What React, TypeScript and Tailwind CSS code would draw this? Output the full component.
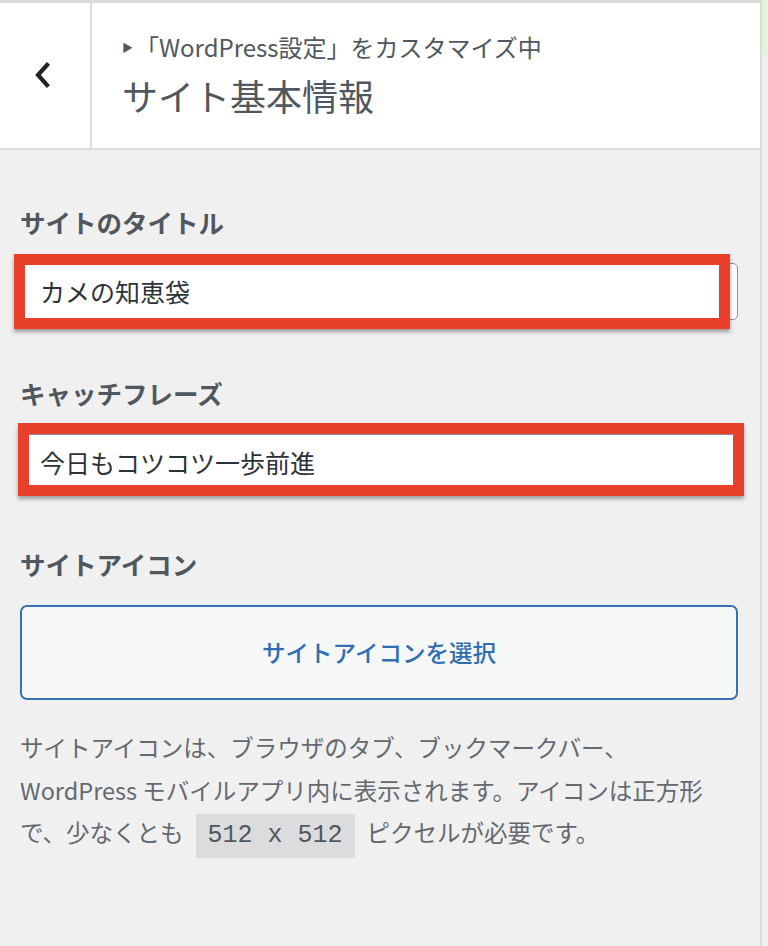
import React from "react";

const jp = { fontFamily: '"Noto Sans CJK JP", "Noto Sans", sans-serif' };

const Field: React.FC<{ label: string; value: string; mark: "a" | "b" }> = ({ label, value, mark }) => (
  <div className="mb-[58px]">
    <div className="h-[30px] flex items-center text-[25.5px] font-bold text-[#50575e] mb-[26px]">{label}</div>
    <div className="relative">
      <div className="h-[57px] bg-white border border-[#8c8f94] rounded-[5px] flex items-center px-[19px] text-[25px] text-[#2c3338]">
        {value}
      </div>
      {/* red annotation frame */}
      {mark === "a" ? (
        <div className="absolute left-[-6px] top-[-9px] w-[716px] h-[75px] border-[11px] border-[#e8402a] shadow-[0_3px_4px_rgba(0,0,0,0.35)]" />
      ) : (
        <div className="absolute left-[-2px] top-[-11px] w-[726px] h-[73px] border-[11px] border-[#e8402a] shadow-[0_3px_4px_rgba(0,0,0,0.35)]" />
      )}
    </div>
  </div>
);

export default function App() {
  return (
    <div className="flex w-[768px] h-[946px] bg-[#f0f0f1] overflow-hidden" style={jp}>
      <div className="w-[762px] border-t-[3px] border-[#dcdcde] border-r-2 flex flex-col">
        {/* header */}
        <div className="h-[147px] bg-white border-b-2 border-[#dcdcde] flex">
          <div className="w-[92px] border-r-2 border-[#dcdcde] flex items-center justify-center pr-[6px] pb-[2px]">
            <svg width="20" height="28" viewBox="0 0 20 28" fill="none">
              <path d="M15 4 L6 14 L15 24" stroke="#1d2327" strokeWidth="4.2" strokeLinecap="square" />
            </svg>
          </div>
          <div className="pl-[30px] pt-[27px] text-[#50575e]">
            <div className="flex items-center text-[24px] h-[34px]">
              <span className="text-[11px] mr-[2px] text-[#50575e]">▶</span>
              <span>「WordPress設定」をカスタマイズ中</span>
            </div>
            <div className="text-[36px] leading-[44px] mt-[9px]">サイト基本情報</div>
          </div>
        </div>

        {/* content */}
        <div className="pl-[20px] pr-[22px] pt-[57px]">
          <Field label="サイトのタイトル" value="カメの知恵袋" mark="a" />
          <Field label="キャッチフレーズ" value="今日もコツコツ一歩前進" mark="b" />

          <div className="h-[30px] flex items-center text-[25.5px] font-bold text-[#50575e] mb-[26px]">サイトアイコン</div>
          <button className="w-full h-[95px] bg-[#f6f7f7] border-2 border-[#3872b2] rounded-[7px] text-[23.5px] font-medium text-[#2f6eb0]">
            サイトアイコンを選択
          </button>

          <p className="mt-[26px] text-[23.5px] leading-[42.5px] text-[#646970]">
            サイトアイコンは、ブラウザのタブ、ブックマークバー、
            <br />
            WordPress モバイルアプリ内に表示されます。アイコンは正方形
            <br />
            で、少なくとも
            <code
              className="inline-block mx-[12px] px-[12px] h-[44px] align-middle leading-[44px] bg-[#dcdcde] text-[25px] text-[#50575e]"
              style={{ fontFamily: '"Liberation Mono", monospace' }}
            >
              512 x 512
            </code>
            ピクセルが必要です。
          </p>
        </div>
      </div>
      <div className="flex-1 flex flex-col">
        <div className="h-[55px] bg-[#e5f5da]" />
        <div className="flex-1 bg-[#f0f0f1]" />
      </div>
    </div>
  );
}
